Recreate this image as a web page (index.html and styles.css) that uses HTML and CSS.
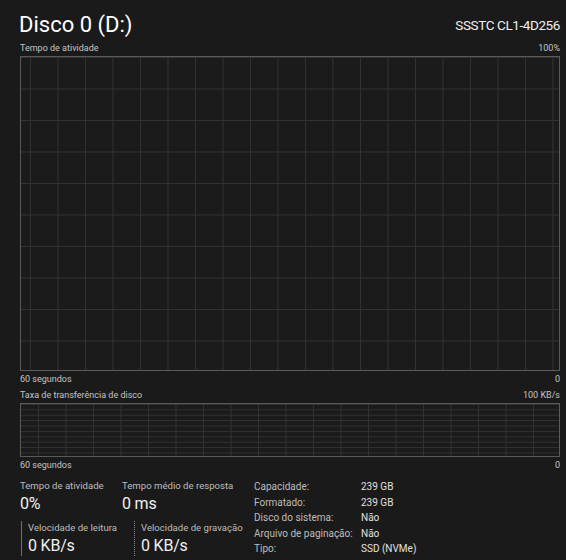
FILE: index.html
```html
<!DOCTYPE html>
<html lang="pt-BR">
<head>
    <meta charset="UTF-8">
    <title>Disco 0 (D:)</title>
    <link rel="stylesheet" href="styles.css">
</head>
<body>
    <div class="panel">
        <div class="header">
            <h1 class="title">Disco 0 (D:)</h1>
            <div class="model">SSSTC CL1-4D256</div>
        </div>

        <div class="axis top-axis">
            <span>Tempo de atividade</span>
            <span>100%</span>
        </div>
        <div class="graph graph-big"></div>
        <div class="axis">
            <span>60 segundos</span>
            <span>0</span>
        </div>

        <div class="axis second">
            <span>Taxa de transferência de disco</span>
            <span>100 KB/s</span>
        </div>
        <div class="graph graph-small"></div>
        <div class="axis">
            <span>60 segundos</span>
            <span>0</span>
        </div>

        <div class="stats">
            <div class="live">
                <div class="stat-row">
                    <div class="stat">
                        <div class="stat-label">Tempo de atividade</div>
                        <div class="stat-value">0%</div>
                    </div>
                    <div class="stat">
                        <div class="stat-label">Tempo médio de resposta</div>
                        <div class="stat-value">0 ms</div>
                    </div>
                </div>
                <div class="stat-row">
                    <div class="stat speed read">
                        <div class="stat-label">Velocidade de leitura</div>
                        <div class="stat-value">0 KB/s</div>
                    </div>
                    <div class="stat speed write">
                        <div class="stat-label">Velocidade de gravação</div>
                        <div class="stat-value">0 KB/s</div>
                    </div>
                </div>
            </div>

            <table class="details">
                <tr><td>Capacidade:</td><td>239 GB</td></tr>
                <tr><td>Formatado:</td><td>239 GB</td></tr>
                <tr><td>Disco do sistema:</td><td>Não</td></tr>
                <tr><td>Arquivo de paginação:</td><td>Não</td></tr>
                <tr><td>Tipo:</td><td>SSD (NVMe)</td></tr>
            </table>
        </div>
    </div>
</body>
</html>
```

FILE: styles.css
```css
body {
    margin: 0;
    background-color: #1a1a1a;
    color: #d4d4d4;
    font-family: Roboto, "Noto Sans", sans-serif;
}
.panel {
    padding: 0 6px 0 20px;
}
.header {
    display: flex;
    justify-content: space-between;
    align-items: flex-end;
    height: 40px;
}
.title {
    margin: 0;
    font-size: 22px;
    font-weight: 400;
    color: #ffffff;
    line-height: 30px;
    margin-left: -1px;
}
.model {
    font-size: 13.5px;
    letter-spacing: -0.4px;
    color: #f0f0f0;
    line-height: 30px;
}
.axis {
    display: flex;
    justify-content: space-between;
    font-size: 9px;
    color: #c4c4c4;
    height: 16px;
    line-height: 16px;
    white-space: nowrap;
}
.axis.second {
    line-height: 17px;
}
.graph {
    border: 1px solid #5a5a5a;
    background-color: #1b1b1b;
    background-image:
        linear-gradient(to right, #323232 1px, transparent 1px),
        linear-gradient(to bottom, #323232 1px, transparent 1px);
}
.graph-big {
    height: 313px;
    background-size: 27.5px 100%, 100% 31.5px;
    background-position: 9px 0, 0 0;
}
.graph-small {
    height: 52px;
    background-size: 27.5px 100%, 100% 5.4px;
    background-position: 17px 0, 0 0;
}
.stats {
    display: flex;
    margin-top: 6px;
    white-space: nowrap;
}
.live {
    width: 234px;
}
.stat-row {
    display: flex;
}
.stat-row + .stat-row {
    margin-top: 7px;
}
.stat {
    width: 102px;
}
.stat-label {
    font-size: 9.6px;
    color: #bdbdbd;
    line-height: 14px;
}
.stat-value {
    font-size: 16px;
    letter-spacing: -0.2px;
    color: #f0f0f0;
    line-height: 21px;
}
.speed {
    padding-left: 6px;
    margin-left: 1px;
    border-left: 1px solid #2b8b80;
    width: 106px;
}
.speed.write {
    margin-left: 0;
    border-left: 1px dotted #8a8a8a;
}
.details {
    border-collapse: collapse;
    font-size: 10px;
    color: #bdbdbd;
}
.details td {
    padding: 0;
    height: 15.5px;
    line-height: 15.5px;
}
.details td:first-child {
    width: 107px;
}
.details td:last-child {
    color: #e0e0e0;
}
```
